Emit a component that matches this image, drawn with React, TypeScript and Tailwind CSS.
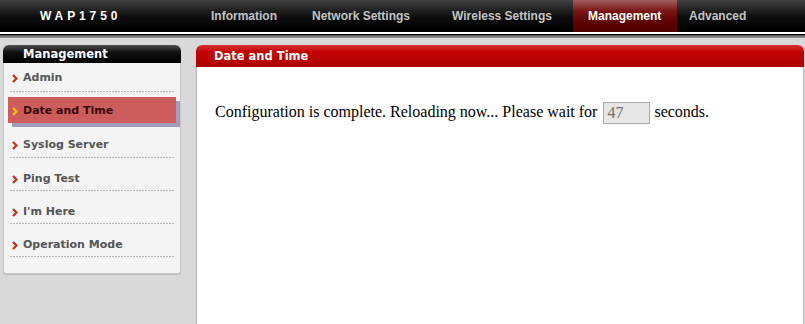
import React from "react";

const Chevron = ({ color }: { color: string }) => (
  <svg width="6" height="9" viewBox="0 0 6 9" className="block">
    <polyline points="1,1 4.5,4.5 1,8" fill="none" stroke={color} strokeWidth="2.2" />
  </svg>
);

const Dashed = () => (
  <div className="mx-[6px] h-px bg-[repeating-linear-gradient(to_right,#b8b8b8_0_2px,transparent_2px_3px)]" />
);

const items = ["Admin", "Date and Time", "Syslog Server", "Ping Test", "I'm Here", "Operation Mode"];

export default function App() {
  const verdana = { fontFamily: '"DejaVu Sans", Verdana, sans-serif' };
  return (
    <div className="w-[805px] h-[324px] overflow-hidden bg-[#d9d9d9] flex flex-col">
      {/* header */}
      <div
        className="h-[32px] flex items-center bg-[linear-gradient(to_bottom,#404040,#0c0c0c_55%,#000)] text-[12px] font-bold"
        style={{ fontFamily: '"Liberation Sans", Arial, sans-serif' }}
      >
        <div className="w-[196px] pl-[40px] text-white tracking-[3.9px]">WAP1750</div>
        <div className="w-[101px] pl-[15px] text-[#c4c4c4]">Information</div>
        <div className="w-[140px] pl-[15px] text-[#c4c4c4]">Network Settings</div>
        <div className="w-[136px] pl-[15px] text-[#c4c4c4]">Wireless Settings</div>
        <div className="w-[104px] h-full flex items-center pl-[15px] text-white bg-[linear-gradient(to_bottom,#a25c5c,#7a1414_35%,#5e0000_70%,#520000)]">
          Management
        </div>
        <div className="pl-[12px] text-[#c4c4c4]">Advanced</div>
      </div>
      <div className="h-[2px] bg-white" />
      <div className="h-px bg-black" />
      <div className="h-[3px] bg-[linear-gradient(to_bottom,#4a4a4a,#a0a0a0)]" />

      {/* content */}
      <div className="flex flex-1 pt-[7px]">
        {/* sidebar */}
        <div className="ml-[3px] w-[178px] self-start" style={verdana}>
          <div className="h-[18px] rounded-t-[6px] bg-[linear-gradient(to_bottom,#505050,#111_40%,#000)] text-white text-[11.5px] font-bold leading-[18px] pl-[20px]">
            Management
          </div>
          <div className="bg-[#f4f4f4] border-x border-b border-[#c9c9c9] rounded-b-[3px] pb-[16px] shadow-[0_1px_1px_#b8b8b8] text-[11px] font-bold">
            {items.map((it, i) => {
              if (i === 1) {
                return (
                  <div
                    key={it}
                    className="ml-[4px] mr-[4px] mt-[5px] h-[26px] bg-[#cd5c5c] shadow-[4px_4px_0_#9f9fbb] flex items-center pl-[4px] pt-[2px] text-[#3a0808]"
                  >
                    <span className="w-[11px] flex"><Chevron color="#f2c200" /></span>
                    <span>{it}</span>
                  </div>
                );
              }
              const pt = i === 0 ? "pt-[8px] pb-[6px]" : i === 2 ? "pt-[15px] pb-[5px]" : "pt-[14px] pb-[4px]";
              return (
                <div key={it}>
                  <div className={`${pt} pl-[8px] flex items-center leading-[14px] text-[#555]`}>
                    <span className="w-[11px] flex"><Chevron color="#c0301c" /></span>
                    <span>{it}</span>
                  </div>
                  <Dashed />
                </div>
              );
            })}
          </div>
        </div>

        {/* main panel */}
        <div className="ml-[15px] w-[608px] flex flex-col">
          <div
            className="h-[22px] rounded-t-[6px] bg-[linear-gradient(to_bottom,#d83434,#c40404_30%,#ae0000)] text-white text-[11.5px] font-bold leading-[22px] pl-[18px]"
            style={verdana}
          >
            Date and Time
          </div>
          <div className="flex-1 bg-white border-x border-[#b4b4b4]">
            <p
              className="mt-[34px] pl-[18px] text-[16px] leading-[22px] text-black"
              style={{ fontFamily: '"Liberation Serif", "Times New Roman", serif' }}
            >
              Configuration is complete. Reloading now... Please wait for{" "}
              <input
                readOnly
                value="47"
                className="align-middle ml-[2px] w-[47px] h-[22px] bg-[#e6e6e6] border border-[#ababab] pl-[3px] text-[16px] text-[#707070] outline-none"
                style={{ fontFamily: '"Liberation Serif", "Times New Roman", serif' }}
              />{" "}
              seconds.
            </p>
          </div>
        </div>
      </div>
    </div>
  );
}
